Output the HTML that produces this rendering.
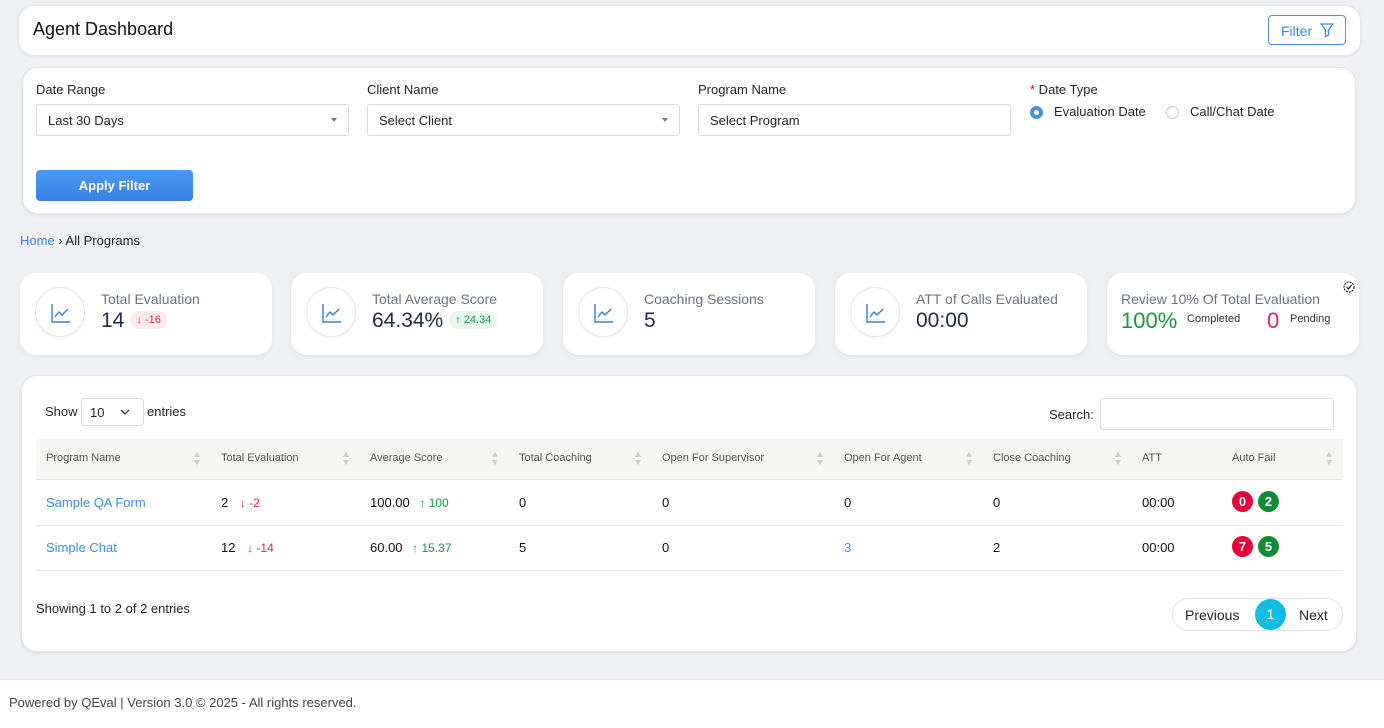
<!DOCTYPE html>
<html><head><meta charset="utf-8"><style>
*{box-sizing:border-box;margin:0;padding:0}
body{width:1384px;height:728px;background:#eef0f3;font-family:"Liberation Sans",Arial,sans-serif;color:#212529;position:relative;overflow:hidden;font-size:13px}
.abs{position:absolute}
.card{position:absolute;background:#fff;border-radius:16px;box-shadow:0 1px 3px rgba(0,0,0,.08);border:1px solid #e3e5e8}
.lbl{position:absolute;font-size:13px;color:#212529}
.sel{position:absolute;height:32px;border:1px solid #d8dbe0;border-radius:3px;background:#fff;font-size:13px;padding:8px 11px}
.caret{position:absolute;right:11px;top:13px;border-left:3.5px solid transparent;border-right:3.5px solid transparent;border-top:4px solid #777}
.kc{position:absolute;top:273px;width:252px;height:82px;background:#fff;border-radius:16px;box-shadow:0 2px 6px rgba(0,0,0,.06)}
.ic{position:absolute;left:15px;top:14px;width:50px;height:50px;border-radius:50%;border:1px solid #e3e5e8;box-shadow:0 1px 4px rgba(0,0,0,.06)}
.ic svg{position:absolute;left:15px;top:15px}
.kt{position:absolute;left:81px;top:18px;font-size:14px;color:#6b7280}
.kv{position:absolute;left:81px;top:36px;font-size:21px;color:#1e2a4a}
.pill{display:inline-block;font-size:11px;padding:3px 6px;border-radius:10px;vertical-align:4px;margin-left:6px}
.th{position:absolute;top:452px;font-size:11px;color:#555}
.srt{position:absolute;top:452px;width:8px;height:14px}
.srt:before{content:"";position:absolute;top:0;border-left:3.5px solid transparent;border-right:3.5px solid transparent;border-bottom:5px solid #ccc}
.srt:after{content:"";position:absolute;top:8px;border-left:3.5px solid transparent;border-right:3.5px solid transparent;border-top:5px solid #ccc}
.td{position:absolute;font-size:13px;color:#111}
.b{display:inline-block;width:21px;height:21px;border-radius:50%;color:#fff;text-align:center;line-height:21px;font-size:13px;font-weight:bold;margin-right:5px}
</style></head><body>
<div class="card" style="left:18px;top:5px;width:1343px;height:51px"></div>
<div class="abs" style="left:33px;top:19px;font-size:18px;color:#111">Agent Dashboard</div>
<div class="abs" style="left:1268px;top:15px;width:78px;height:30px;border:1px solid #4a90e2;border-radius:4px;color:#3b82f6;font-size:14px;padding:7px 0 0 12px">Filter
<svg class="abs" style="left:50px;top:6px" width="16" height="16" viewBox="0 0 16 16" fill="none" stroke="#3b82f6" stroke-width="1.2"><path d="M2 2h12l-4.5 6v5l-3 1.5V8z"/></svg></div>

<div class="card" style="left:22px;top:67px;width:1334px;height:147px"></div>
<div class="lbl" style="left:36px;top:82px">Date Range</div>
<div class="lbl" style="left:367px;top:82px">Client Name</div>
<div class="lbl" style="left:698px;top:82px">Program Name</div>
<div class="lbl" style="left:1030px;top:82px"><span style="color:#e00">*</span> Date Type</div>
<div class="sel" style="left:36px;top:104px;width:313px">Last 30 Days<div class="caret"></div></div>
<div class="sel" style="left:367px;top:104px;width:313px">Select Client<div class="caret"></div></div>
<div class="sel" style="left:698px;top:104px;width:313px">Select Program</div>
<div class="abs" style="left:1030px;top:106px;width:13px;height:13px;border-radius:50%;border:4px solid #4a90e2"></div>
<div class="lbl" style="left:1054px;top:104px">Evaluation Date</div>
<div class="abs" style="left:1166px;top:106px;width:13px;height:13px;border-radius:50%;border:1px solid #ccc"></div>
<div class="lbl" style="left:1190px;top:104px">Call/Chat Date</div>
<div class="abs" style="left:36px;top:170px;width:157px;height:31px;border-radius:4px;background:linear-gradient(#4a9af0,#3880e8);color:#fff;font-size:13px;font-weight:bold;text-align:center;line-height:31px">Apply Filter</div>

<div class="abs" style="left:20px;top:233px;font-size:13px"><span style="color:#3b82f6">Home</span> <span style="color:#333">&#x203A;</span> All Programs</div>

<div class="kc" style="left:20px"><div class="ic"><svg width="20" height="20" viewBox="0 0 20 20" fill="none" stroke="#3b7fd4" stroke-width="1.4"><path d="M1 1v18h18M4 14l4-5 3 3 6-6"/></svg></div><div class="kt">Total Evaluation</div><div class="kv">14<span class="pill" style="background:#fdecee;color:#e0294d">&#x2193; -16</span></div></div>
<div class="kc" style="left:291px"><div class="ic"><svg width="20" height="20" viewBox="0 0 20 20" fill="none" stroke="#3b7fd4" stroke-width="1.4"><path d="M1 1v18h18M4 14l4-5 3 3 6-6"/></svg></div><div class="kt">Total Average Score</div><div class="kv">64.34%<span class="pill" style="background:#e8f8ee;color:#139a45">&#x2191; 24.34</span></div></div>
<div class="kc" style="left:563px"><div class="ic"><svg width="20" height="20" viewBox="0 0 20 20" fill="none" stroke="#3b7fd4" stroke-width="1.4"><path d="M1 1v18h18M4 14l4-5 3 3 6-6"/></svg></div><div class="kt">Coaching Sessions</div><div class="kv">5</div></div>
<div class="kc" style="left:835px"><div class="ic"><svg width="20" height="20" viewBox="0 0 20 20" fill="none" stroke="#3b7fd4" stroke-width="1.4"><path d="M1 1v18h18M4 14l4-5 3 3 6-6"/></svg></div><div class="kt">ATT of Calls Evaluated</div><div class="kv">00:00</div></div>
<div class="kc" style="left:1107px"><div class="kt" style="left:14px">Review 10% Of Total Evaluation</div>
<svg class="abs" style="left:236px;top:8px" width="12" height="12" viewBox="0 0 12 12" fill="none" stroke="#111" stroke-width="1.1"><circle cx="6" cy="6" r="5" stroke-dasharray="2 1"/><path d="M3.5 6l2 2 3-4"/></svg>
<div class="abs" style="left:14px;top:35px;font-size:22px;color:#129a3e">100%</div><div class="abs" style="left:80px;top:40px;font-size:11px;color:#333">Completed</div>
<div class="abs" style="left:160px;top:35px;font-size:22px;color:#e8244f">0</div><div class="abs" style="left:183px;top:40px;font-size:11px;color:#333">Pending</div></div>

<div class="card" style="left:21px;top:375px;width:1336px;height:277px"></div>
<div class="lbl" style="left:45px;top:404px">Show</div>
<div class="abs" style="left:81px;top:398px;width:63px;height:28px;border:1px solid #ddd;border-radius:4px;font-size:13px;padding:6px 8px">10<svg class="abs" style="left:38px;top:10px" width="10" height="6" viewBox="0 0 10 6" fill="none" stroke="#333" stroke-width="1.3"><path d="M1 1l4 4 4-4"/></svg></div>
<div class="lbl" style="left:147px;top:404px">entries</div>
<div class="lbl" style="left:1049px;top:407px">Search:</div>
<div class="abs" style="left:1100px;top:398px;width:234px;height:32px;border:1px solid #ddd;border-radius:3px"></div>
<div class="abs" style="left:36px;top:439px;width:1307px;height:41px;background:#f5f5f4;border-bottom:1px solid #dfe1e4"></div>
<div class="th" style="left:46px">Program Name</div><div class="srt" style="left:194px"></div>
<div class="th" style="left:221px">Total Evaluation</div><div class="srt" style="left:343px"></div>
<div class="th" style="left:370px">Average Score</div><div class="srt" style="left:492px"></div>
<div class="th" style="left:519px">Total Coaching</div><div class="srt" style="left:635px"></div>
<div class="th" style="left:662px">Open For Supervisor</div><div class="srt" style="left:817px"></div>
<div class="th" style="left:844px">Open For Agent</div><div class="srt" style="left:966px"></div>
<div class="th" style="left:993px">Close Coaching</div><div class="srt" style="left:1115px"></div>
<div class="th" style="left:1142px">ATT</div>
<div class="th" style="left:1232px">Auto Fail</div><div class="srt" style="left:1326px"></div>
<div class="abs" style="left:36px;top:525px;width:1307px;height:1px;background:#e3e5e8"></div>
<div class="abs" style="left:36px;top:570px;width:1307px;height:1px;background:#e3e5e8"></div>

<div class="td" style="left:46px;top:495px;color:#3b8be8">Sample QA Form</div>
<div class="td" style="left:221px;top:495px">2 <span style="color:#e0294d;font-size:12px;margin-left:8px">&#x2193; -2</span></div>
<div class="td" style="left:370px;top:495px">100.00 <span style="color:#139a45;font-size:12px;margin-left:6px">&#x2191; 100</span></div>
<div class="td" style="left:519px;top:495px">0</div><div class="td" style="left:662px;top:495px">0</div><div class="td" style="left:844px;top:495px">0</div><div class="td" style="left:993px;top:495px">0</div><div class="td" style="left:1142px;top:495px">00:00</div>
<div class="td" style="left:1232px;top:491px"><span class="b" style="background:#e8003a">0</span><span class="b" style="background:#0f8c35">2</span></div>

<div class="td" style="left:46px;top:540px;color:#3b8be8">Simple Chat</div>
<div class="td" style="left:221px;top:540px">12 <span style="color:#e0294d;font-size:12px;margin-left:8px">&#x2193; -14</span></div>
<div class="td" style="left:370px;top:540px">60.00 <span style="color:#139a45;font-size:12px;margin-left:6px">&#x2191; 15.37</span></div>
<div class="td" style="left:519px;top:540px">5</div><div class="td" style="left:662px;top:540px">0</div><div class="td" style="left:844px;top:540px;color:#3b8be8">3</div><div class="td" style="left:993px;top:540px">2</div><div class="td" style="left:1142px;top:540px">00:00</div>
<div class="td" style="left:1232px;top:536px"><span class="b" style="background:#e8003a">7</span><span class="b" style="background:#0f8c35">5</span></div>

<div class="lbl" style="left:36px;top:601px">Showing 1 to 2 of 2 entries</div>
<div class="abs" style="left:1172px;top:598px;width:171px;height:33px;border:1px solid #dfe1e4;border-radius:17px;font-size:14px">
<span class="abs" style="left:12px;top:8px">Previous</span>
<span class="abs" style="left:82px;top:0;width:31px;height:31px;border-radius:50%;background:#11bde0;color:#fff;text-align:center;line-height:31px">1</span>
<span class="abs" style="left:126px;top:8px">Next</span></div>

<div class="abs" style="left:0;top:679px;width:1384px;height:49px;background:#fff;border-top:1px solid #e3e5e8"></div>
<div class="abs" style="left:9px;top:695px;font-size:13px;color:#444">Powered by QEval | Version 3.0 © 2025 - All rights reserved.</div>
</body></html>
